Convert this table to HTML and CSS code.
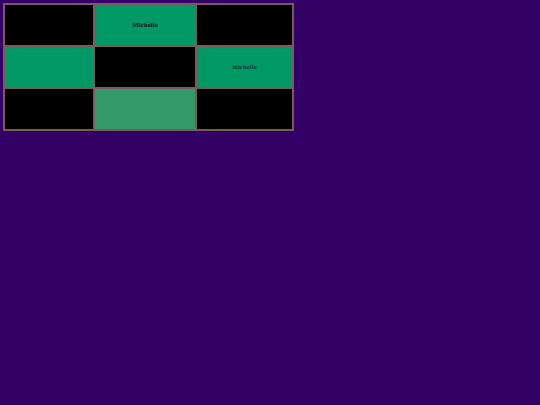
FILE: index.html
```html
<!DOCTYPE html>
<html>
<head>
<meta charset="utf-8">
<link rel="stylesheet" href="styles.css">
</head>
<body>
<table class="grid">
  <tr>
    <td class="c1 black"></td>
    <td class="c2 green bold">Michelle</td>
    <td class="c3 black"></td>
  </tr>
  <tr>
    <td class="c1 green"></td>
    <td class="c2 black"></td>
    <td class="c3 green">michelle</td>
  </tr>
  <tr>
    <td class="c1 black"></td>
    <td class="c2 light"></td>
    <td class="c3 black"></td>
  </tr>
</table>
</body>
</html>
```
FILE: styles.css
```css
html, body {
  margin: 0;
  background: #330066;
}
body {
  padding: 3px;
  font-family: "Liberation Serif", serif;
}
.grid {
  border: 1px solid #7a5a5a;
  border-collapse: separate;
  border-spacing: 0;
}
.grid td {
  border: 1px solid #7a5a5a;
  height: 40px;
  padding: 0;
  text-align: center;
  vertical-align: middle;
  font-size: 7px;
  color: #111;
}
.c1 { width: 88px; }
.c2 { width: 100px; }
.c3 { width: 95px; }
.black { background: #000; }
.green { background: #009966; }
.light { background: #339966; }
.bold { font-weight: bold; }
```
